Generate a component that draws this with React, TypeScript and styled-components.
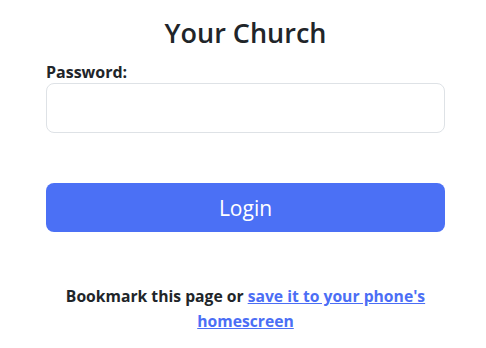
import React, { useState } from 'react';
import { createGlobalStyle, styled } from 'styled-components';

const GlobalStyle = createGlobalStyle`
  body {
    margin: 0;
    background: #ffffff;
    color: #212529;
    font-family: "Open Sans", "Noto Sans", sans-serif;
  }
  * {
    box-sizing: border-box;
  }
`;

const Page = styled.main`
  width: 399px;
  margin-left: 46px;
  padding-top: 14px;
`;

const Title = styled.h1`
  margin: 0 0 10px;
  font-size: 27px;
  font-weight: 600;
  line-height: 38px;
  text-align: center;
  color: #212529;
`;

const Form = styled.form`
  display: flex;
  flex-direction: column;
`;

const Label = styled.label`
  font-size: 16px;
  font-weight: 700;
  line-height: 20px;
  margin-bottom: 1px;
`;

const Input = styled.input`
  display: block;
  width: 100%;
  height: 50px;
  padding: 0 12px;
  font-size: 16px;
  border: 1px solid #dee2e6;
  border-radius: 8px;
  outline: none;
`;

const Button = styled.button`
  margin-top: 50px;
  height: 49px;
  width: 100%;
  border: none;
  border-radius: 8px;
  background-color: #4b70f5;
  color: #ffffff;
  font-family: inherit;
  font-size: 21px;
  cursor: pointer;
`;

const Footer = styled.p`
  margin: 52px 0 0;
  font-size: 15.7px;
  font-weight: 700;
  line-height: 25px;
  text-align: center;
`;

const Link = styled.a`
  color: #4b6ef5;
  text-decoration: underline;
`;

const App = () => {
  const [password, setPassword] = useState('');

  return (
    <>
      <GlobalStyle />
      <Page>
        <Title>Your Church</Title>
        <Form onSubmit={e => e.preventDefault()}>
          <Label htmlFor="password">Password:</Label>
          <Input
            id="password"
            type="password"
            value={password}
            onChange={e => setPassword(e.target.value)}
          />
          <Button type="submit">Login</Button>
        </Form>
        <Footer>
          Bookmark this page or <Link href="#">save it to your phone's homescreen</Link>
        </Footer>
      </Page>
    </>
  );
};

export default App;
